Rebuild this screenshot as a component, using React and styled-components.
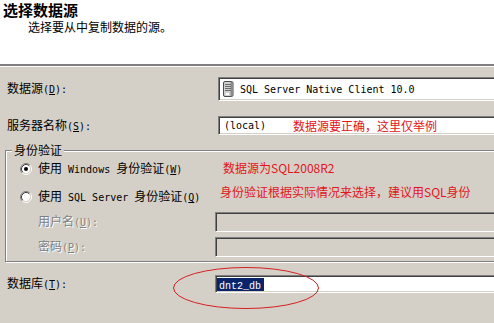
import React from "react";
import styled, { createGlobalStyle } from "styled-components";

const GlobalStyle = createGlobalStyle`
  body {
    margin: 0;
    background: #d4d0c8;
  }
`;

const Page = styled.div`
  position: relative;
  width: 494px;
  height: 323px;
  overflow: hidden;
  background: #d4d0c8;
  font-family: "Noto Sans CJK SC", "Noto Sans", sans-serif;
  font-size: 12px;
  color: #000;
`;

const Header = styled.div`
  box-sizing: border-box;
  height: 66px;
  padding: 2px 0 0 3px;
  background: #fff;
  border-bottom: 2px solid #808080;
  box-shadow: 0 1px 0 #fff;
`;

const Title = styled.div`
  font-size: 15px;
  font-weight: 700;
  line-height: 16px;
`;

const Subtitle = styled.div`
  margin: 2px 0 0 25px;
  line-height: 13px;
`;

const Lat = styled.span`
  font-family: "DejaVu Sans Mono", "Liberation Mono", monospace;
  font-size: 10px;
  white-space: pre;
`;

const Row = styled.div`
  display: flex;
  align-items: center;
  margin-top: ${(p) => p.$top}px;
  padding-left: ${(p) => p.$indent}px;
`;

const Label = styled.div`
  flex-shrink: 0;
  width: ${(p) => p.$w}px;
  line-height: 16px;
  white-space: nowrap;
  color: ${(p) => (p.$disabled ? "#808080" : "#000")};
  text-shadow: ${(p) => (p.$disabled ? "1px 1px 0 #fff" : "none")};
`;

const Field = styled.div`
  box-sizing: border-box;
  flex: 1;
  display: flex;
  align-items: center;
  gap: 6px;
  height: ${(p) => p.$h}px;
  margin-right: -8px;
  padding-left: ${(p) => p.$pad || 2}px;
  background: ${(p) => (p.$disabled ? "#d4d0c8" : "#fff")};
  border-style: solid;
  border-width: 1px;
  border-color: #808080 #fff #fff #808080;
  box-shadow: inset 1px 1px 0 #404040, inset -1px -1px 0 #d4d0c8;
  white-space: nowrap;
`;

const Group = styled.fieldset`
  min-width: 0;
  margin: 8px -10px 0 5px;
  padding: 0 0 4px 0;
  border: 1px solid #808080;
  box-shadow: inset 1px 1px 0 #fff, 1px 1px 0 #fff;
`;

const Legend = styled.legend`
  margin-left: 6px;
  padding: 0 2px;
  line-height: 14px;
  background: #d4d0c8;
`;

const RadioRow = styled.div`
  display: flex;
  align-items: center;
  height: 18px;
  margin-top: ${(p) => p.$top}px;
  padding-left: 14px;
  white-space: nowrap;
`;

const RadioText = styled.span`
  line-height: 16px;
`;

const RadioMark = styled.svg`
  flex-shrink: 0;
  width: 12px;
  height: 12px;
  margin-right: 6px;
`;

const Selected = styled.span`
  display: inline-block;
  height: 13px;
  padding: 0 3px 0 2px;
  line-height: 12px;
  background: #0a246a;
  color: #fff;

  ${Lat} {
    font-family: "Liberation Mono", monospace;
  }
`;

const Note = styled.div`
  position: absolute;
  left: ${(p) => p.$x}px;
  top: ${(p) => p.$y}px;
  line-height: 16px;
  font-size: 12px;
  color: #e3141b;
  white-space: nowrap;
`;

const Ring = styled.svg`
  position: absolute;
  left: 172px;
  top: 266px;
  width: 148px;
  height: 44px;
  overflow: visible;
`;

const ServerIcon = () => (
  <svg width="11" height="16" viewBox="0 0 11 16">
    <rect x="0.5" y="0.5" width="9.5" height="15" rx="1.5" fill="#d0d0d0" stroke="#4a4a4a" />
    <rect x="7.5" y="1" width="2" height="14" fill="#8a8a8a" />
    <path d="M2 3.5h6M2 5.5h6M2 7.5h6M2 9.5h6" stroke="#6a6a6a" />
    <rect x="3" y="12" width="3" height="2" fill="#fff" />
  </svg>
);

const Radio = ({ checked }) => (
  <RadioMark viewBox="0 0 12 12">
    <circle cx="6" cy="6" r="4.5" fill="#fff" />
    <path d="M2.11 9.89A5.5 5.5 0 0 1 9.89 2.11" fill="none" stroke="#808080" />
    <path d="M9.89 2.11A5.5 5.5 0 0 1 2.11 9.89" fill="none" stroke="#fff" />
    <path d="M2.82 9.18A4.5 4.5 0 0 1 9.18 2.82" fill="none" stroke="#404040" />
    <path d="M9.18 2.82A4.5 4.5 0 0 1 2.82 9.18" fill="none" stroke="#d4d0c8" />
    {checked && <circle cx="6" cy="6" r="2" fill="#000" />}
  </RadioMark>
);

export default function App() {
  return (
    <Page>
      <GlobalStyle />
      <Header>
        <Title>选择数据源</Title>
        <Subtitle>选择要从中复制数据的源。</Subtitle>
      </Header>

      <Row $top={11} $indent={7}>
        <Label $w={211}>
          数据源<Lat>(<u>D</u>):</Lat>
        </Label>
        <Field $h={24} $pad={4}>
          <ServerIcon />
          <Lat>SQL Server Native Client 10.0</Lat>
        </Field>
      </Row>

      <Row $top={15} $indent={7}>
        <Label $w={211}>
          服务器名称<Lat>(<u>S</u>):</Lat>
        </Label>
        <Field $h={19} $pad={5}>
          <Lat>(local)</Lat>
        </Field>
      </Row>

      <Group>
        <Legend>身份验证</Legend>
        <RadioRow $top={3}>
          <Radio checked />
          <RadioText>
            使用<Lat>{" Windows "}</Lat>身份验证<Lat>(<u>W</u>)</Lat>
          </RadioText>
        </RadioRow>
        <RadioRow $top={10}>
          <Radio />
          <RadioText>
            使用<Lat>{" SQL Server "}</Lat>身份验证<Lat>(<u>Q</u>)</Lat>
          </RadioText>
        </RadioRow>
        <Row $top={6} $indent={32}>
          <Label $w={177} $disabled>
            用户名<Lat>(<u>U</u>):</Lat>
          </Label>
          <Field $h={20} $disabled />
        </Row>
        <Row $top={5} $indent={32}>
          <Label $w={177} $disabled>
            密码<Lat>(<u>P</u>):</Lat>
          </Label>
          <Field $h={20} $disabled />
        </Row>
      </Group>

      <Row $top={13} $indent={7}>
        <Label $w={208}>
          数据库<Lat>(<u>T</u>):</Lat>
        </Label>
        <Field $h={18} $pad={1}>
          <Selected>
            <Lat>dnt2_db</Lat>
          </Selected>
        </Field>
      </Row>

      <Note $x={293} $y={118}>数据源要正确，这里仅举例</Note>
      <Note $x={223} $y={160}>数据源为SQL2008R2</Note>
      <Note $x={220} $y={184}>身份验证根据实际情况来选择，建议用SQL身份</Note>

      <Ring viewBox="0 0 148 44">
        <ellipse cx="74" cy="22" rx="72.5" ry="20.5" fill="none" stroke="#d42020" strokeWidth="1" />
      </Ring>
    </Page>
  );
}
